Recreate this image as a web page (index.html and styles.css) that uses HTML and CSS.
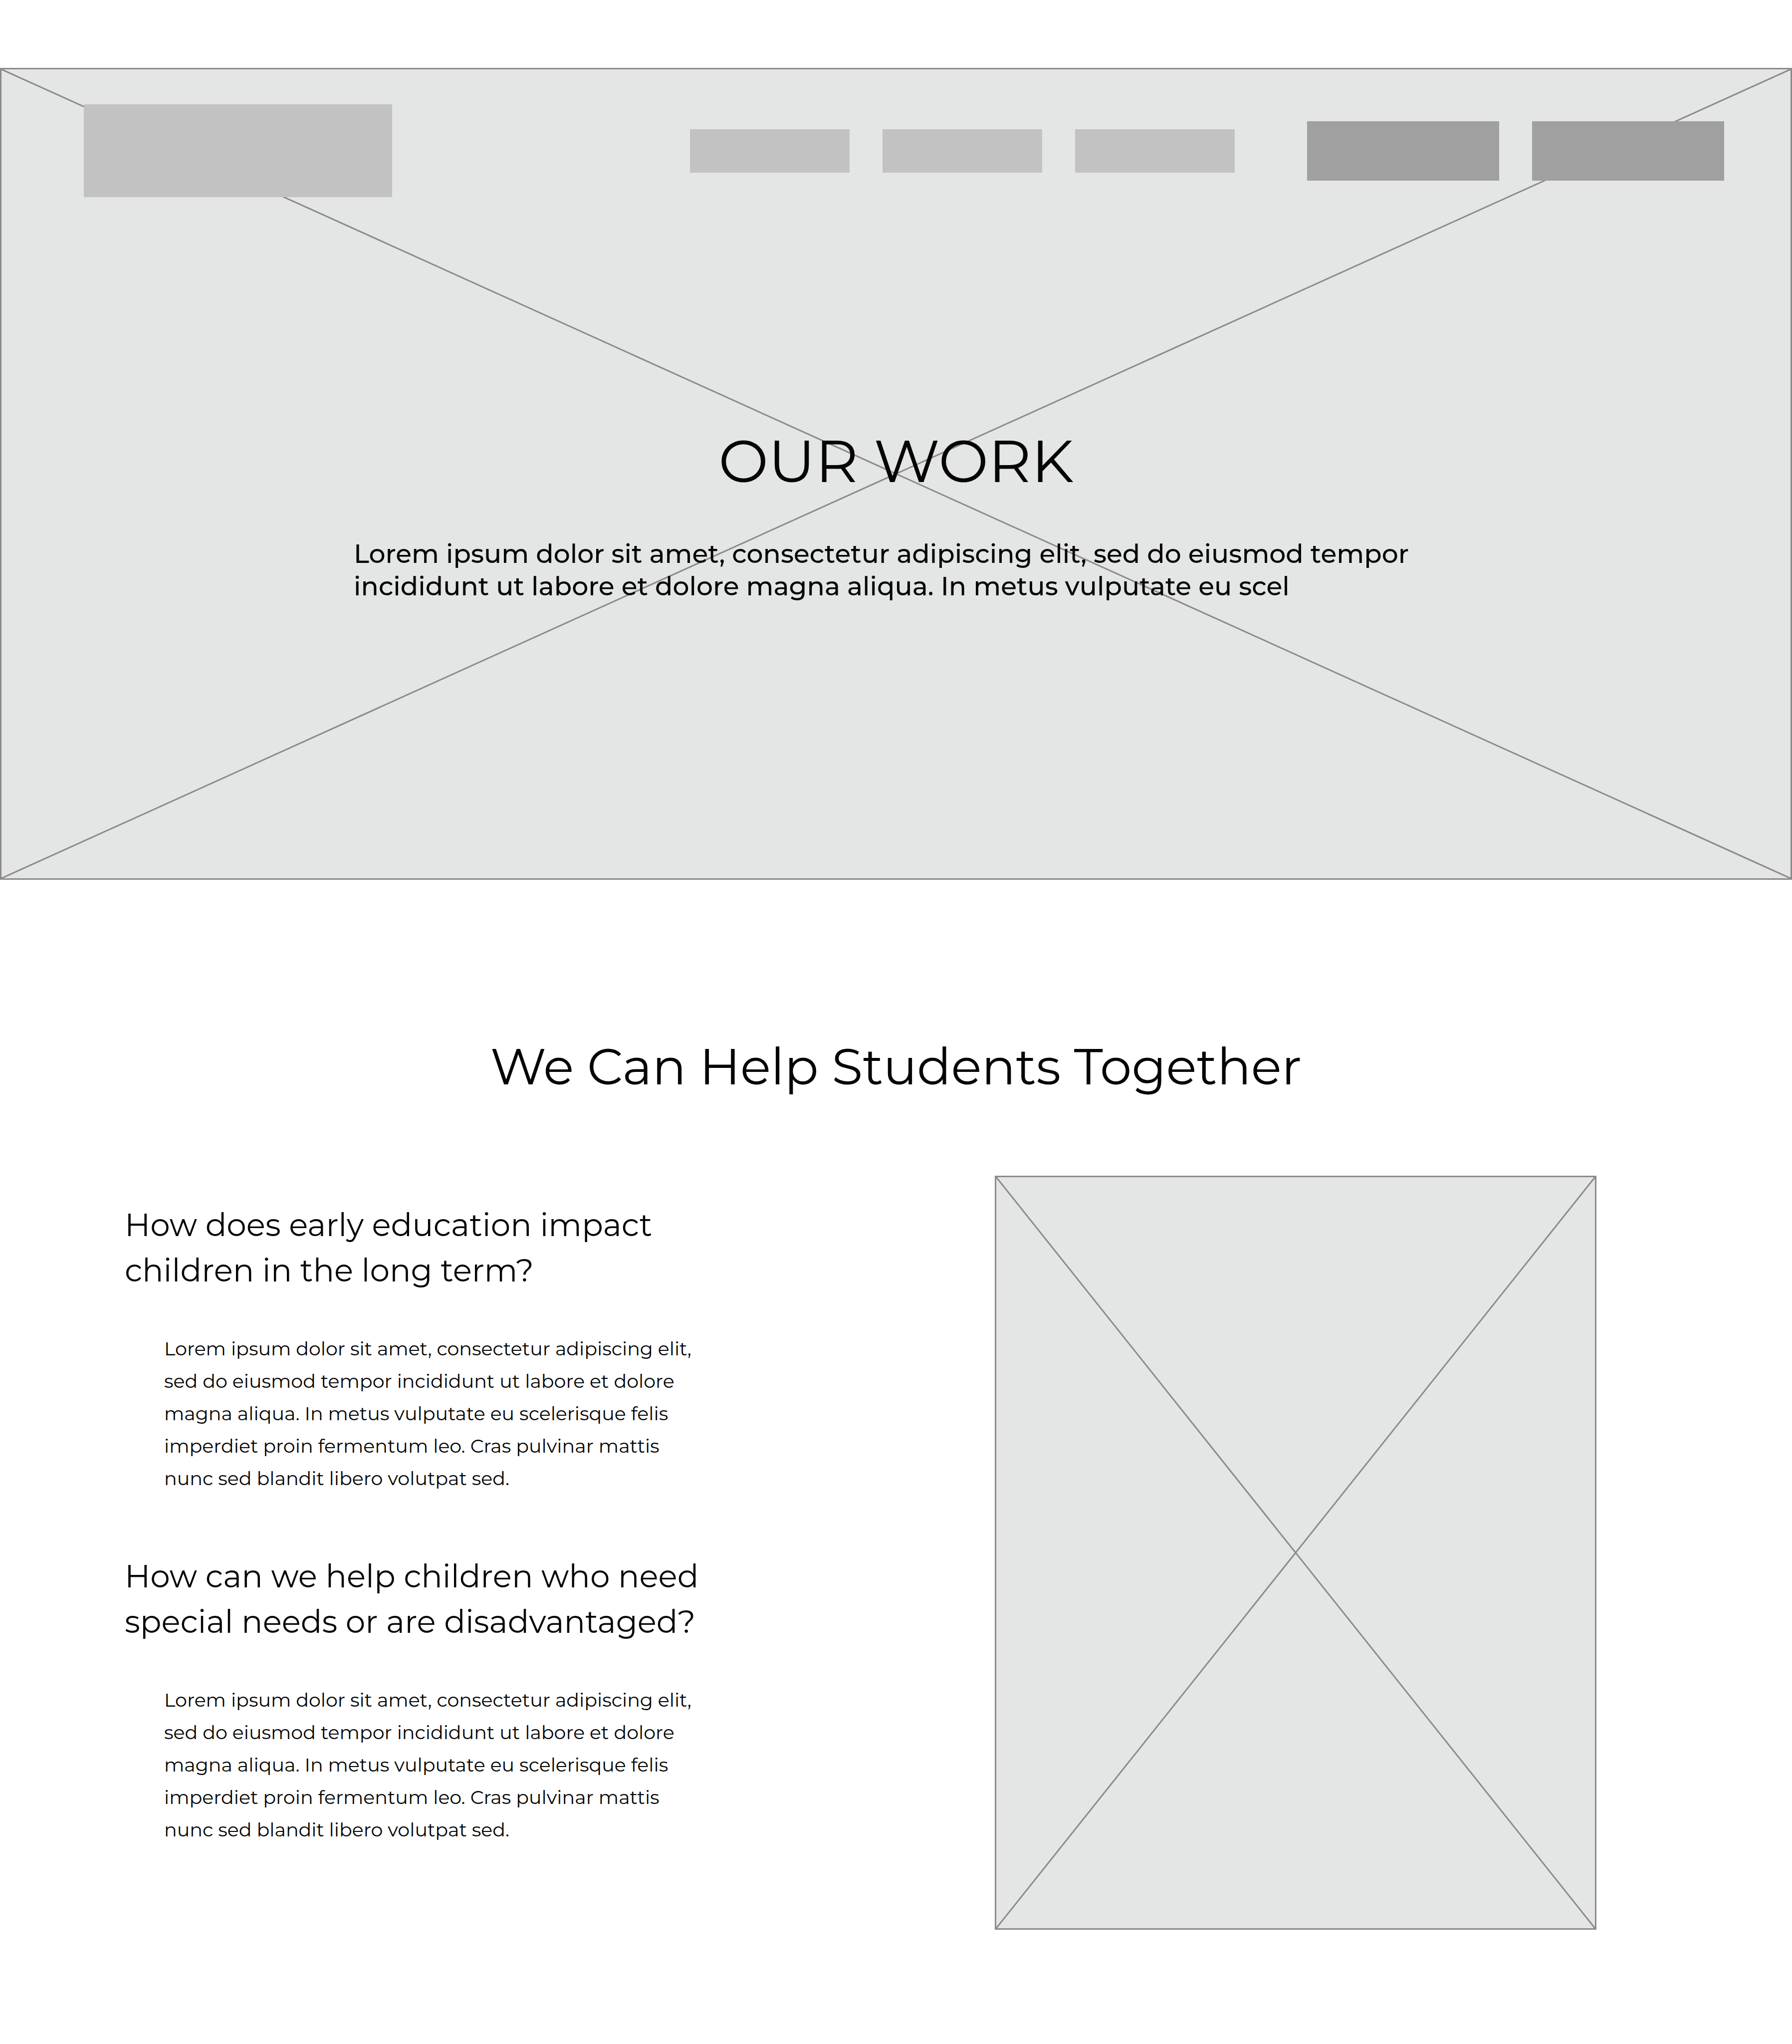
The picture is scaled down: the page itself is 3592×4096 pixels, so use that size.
FILE: index.html
```html
<!DOCTYPE html>
<html lang="en">
<head>
  <meta charset="utf-8">
  <meta name="viewport" content="width=device-width, initial-scale=1">
  <title>Our Work</title>
  <link rel="stylesheet" href="styles.css">
</head>
<body>
  <section class="hero">
    <svg class="cross" aria-hidden="true">
      <line x1="0" y1="0" x2="100%" y2="100%"/>
      <line x1="100%" y1="0" x2="0" y2="100%"/>
    </svg>
    <header class="header">
      <a class="logo" href="#" aria-label="Home"></a>
      <nav class="nav">
        <a class="nav-link" href="#" aria-label="About"></a>
        <a class="nav-link" href="#" aria-label="Our work"></a>
        <a class="nav-link" href="#" aria-label="Contact"></a>
      </nav>
      <div class="actions">
        <button class="action" type="button" aria-label="Log in"></button>
        <button class="action" type="button" aria-label="Donate"></button>
      </div>
    </header>
    <div class="intro">
      <h1 class="title">OUR WORK</h1>
      <p class="lead">Lorem ipsum dolor sit amet, consectetur adipiscing elit, sed do eiusmod tempor<br>incididunt ut labore et dolore magna aliqua. In metus vulputate eu scel</p>
    </div>
  </section>

  <main class="main">
    <h2 class="heading">We Can Help Students Together</h2>
    <div class="columns">
      <div class="questions">
        <article class="question">
          <h3 class="question-title">How does early education impact<br>children in the long term?</h3>
          <p class="answer">Lorem ipsum dolor sit amet, consectetur adipiscing elit,<br>sed do eiusmod tempor incididunt ut labore et dolore<br>magna aliqua. In metus vulputate eu scelerisque felis<br>imperdiet proin fermentum leo. Cras pulvinar mattis<br>nunc sed blandit libero volutpat sed.</p>
        </article>
        <article class="question">
          <h3 class="question-title">How can we help children who need<br>special needs or are disadvantaged?</h3>
          <p class="answer">Lorem ipsum dolor sit amet, consectetur adipiscing elit,<br>sed do eiusmod tempor incididunt ut labore et dolore<br>magna aliqua. In metus vulputate eu scelerisque felis<br>imperdiet proin fermentum leo. Cras pulvinar mattis<br>nunc sed blandit libero volutpat sed.</p>
        </article>
      </div>
      <div class="picture">
        <svg class="cross" aria-hidden="true">
          <line x1="0" y1="0" x2="100%" y2="100%"/>
          <line x1="100%" y1="0" x2="0" y2="100%"/>
        </svg>
      </div>
    </div>
  </main>
</body>
</html>
```
FILE: styles.css
```css
* {
  box-sizing: border-box;
}

body {
  margin: 0;
  background: #fff;
  color: #040504;
  font-family: Montserrat, Inter, sans-serif;
}

h1, h2, h3, p {
  margin: 0;
  font-weight: 400;
}

/* Placeholder surfaces: grey fill, outline and two diagonals */
.hero,
.picture {
  position: relative;
  background: #e4e6e5;
  border: 3px solid #8c8b8a;
}

.cross {
  position: absolute;
  inset: 0;
  width: 100%;
  height: 100%;
}

.cross line {
  stroke: #8c8b8a;
  stroke-width: 3px;
}

.hero {
  margin-top: 136px;
  padding-bottom: 553px;
}

.header {
  position: relative;
  display: flex;
  align-items: center;
  padding: 70px 133px 0 165px;
}

.logo {
  width: 618px;
  height: 186px;
  margin-right: auto;
  background: #c2c2c2;
}

.nav,
.actions {
  display: flex;
  gap: 66px;
}

.nav-link {
  width: 320px;
  height: 87px;
  background: #c2c2c2;
}

.actions {
  margin-left: 145px;
}

.action {
  width: 385px;
  height: 119px;
  padding: 0;
  border: 0;
  background: #a0a0a0;
  cursor: pointer;
}

.intro {
  position: relative;
  max-width: 2174px;
  margin: 456px auto 0;
}

.title {
  font-size: 119px;
  line-height: 146px;
  text-align: center;
}

.lead {
  margin-top: 80px;
  font-size: 52px;
  font-weight: 500;
  line-height: 65px;
}

.main {
  padding: 312px 0 228px;
}

.heading {
  font-size: 101px;
  line-height: 124px;
  text-align: center;
}

.columns {
  display: flex;
  justify-content: space-between;
  align-items: flex-start;
  margin-top: 157px;
  padding: 0 392px 0 250px;
}

.questions {
  display: grid;
  gap: 118px;
  padding-top: 53px;
}

.question-title {
  font-size: 63px;
  line-height: 91px;
}

.answer {
  margin-top: 79px;
  padding-left: 79px;
  font-size: 38px;
  line-height: 65px;
}

.picture {
  width: 1206px;
  height: 1511px;
}
```
